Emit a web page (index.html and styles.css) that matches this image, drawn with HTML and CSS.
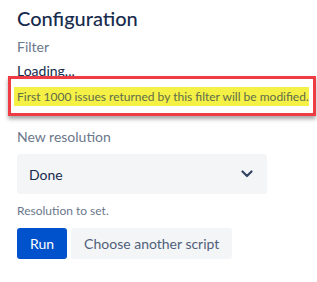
FILE: index.html
```html
<!DOCTYPE html>
<html>
<head>
<meta charset="utf-8">
<link rel="stylesheet" href="styles.css">
</head>
<body>
<div class="panel">
  <h1 class="title">Configuration</h1>
  <div class="label">Filter</div>
  <div class="loading">Loading...</div>
  <div class="callout"><span class="mark">First 1000 issues returned by this filter will be modified.</span></div>
  <div class="label res-label">New resolution</div>
  <div class="select">
    <span class="select-value">Done</span>
    <svg class="chevron" width="12" height="8" viewBox="0 0 12 8"><path d="M1.5 1.5 L6 6 L10.5 1.5" fill="none" stroke="#344563" stroke-width="2.2" stroke-linecap="round" stroke-linejoin="round"/></svg>
  </div>
  <div class="help">Resolution to set.</div>
  <div class="actions">
    <button class="btn btn-primary">Run</button>
    <button class="btn btn-subtle">Choose another script</button>
  </div>
</div>
</body>
</html>
```
FILE: styles.css
```css
html, body {
  margin: 0;
  padding: 0;
  background: #ffffff;
}
body {
  font-family: Lato, "Liberation Sans", sans-serif;
  color: #172b4d;
}
.panel {
  padding: 2px 0 0 17px;
  width: 300px;
}
.title {
  margin: 0;
  font-size: 20px;
  font-weight: 500;
  line-height: 32px;
  color: #172b4d;
}
.label {
  margin-top: 4px;
  font-size: 14px;
  line-height: 18px;
  color: #6b778c;
}
.loading {
  margin-top: 6px;
  font-size: 14px;
  line-height: 18px;
  color: #172b4d;
}
.callout {
  margin: -4px 0 0 -9px;
  width: 308px;
  box-sizing: border-box;
  border: 3px solid #ef3b44;
  padding: 6px 4px 7px 3px;
  box-shadow: 0 3px 4px rgba(0,0,0,0.35);
  position: relative;
}
.mark {
  background: #f5f046;
  color: #5e6c4a;
  font-size: 12px;
  line-height: 19px;
  padding: 0 0 0 3px;
  display: inline-block;
  white-space: nowrap;
}
.res-label {
  margin-top: 12px;
}
.select {
  margin-top: 8px;
  width: 250px;
  height: 40px;
  box-sizing: border-box;
  background: #f4f5f7;
  border-radius: 3px;
  display: flex;
  align-items: center;
  justify-content: space-between;
  padding: 0 14px 0 12px;
}
.select-value {
  font-size: 14px;
  color: #172b4d;
}
.help {
  margin-top: 10px;
  font-size: 12px;
  line-height: 14px;
  color: #6b778c;
}
.actions {
  margin-top: 10px;
  display: flex;
  gap: 4px;
}
.btn {
  border: none;
  border-radius: 3px;
  height: 31px;
  padding: 0 13px;
  font-family: Lato, "Liberation Sans", sans-serif;
  font-size: 14px;
  cursor: pointer;
}
.btn-primary {
  background: #0052cc;
  color: #ffffff;
}
.btn-subtle {
  background: #f4f5f7;
  color: #505f79;
}
```
